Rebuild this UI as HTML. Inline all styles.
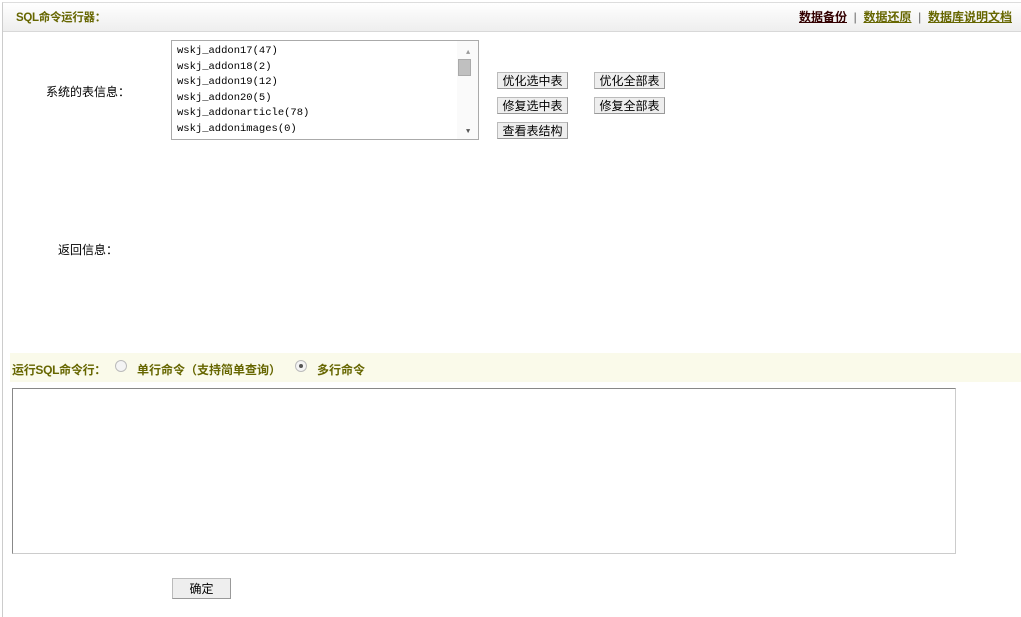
<!DOCTYPE html>
<html><head><meta charset="utf-8"><style>
body{margin:0;width:1021px;height:617px;background:#fff;font-family:"Liberation Sans","Noto Sans CJK SC",sans-serif;font-size:12px;position:relative;overflow:hidden}
.a{position:absolute}
.frame{left:2px;top:2px;width:1019px;height:615px;border-left:1px solid #ccc;border-top:1px solid #ddd;box-sizing:border-box}
.hdr{left:3px;top:3px;width:1018px;height:28px;background:linear-gradient(#fff,#eee);border-bottom:1px solid #d8d8d8}
.olive{color:#666600;font-weight:bold}
.btn{position:absolute;height:17px;line-height:17px;background:#eee;border:1px solid #bbb;border-right-color:#999;border-bottom-color:#999;font-size:12px;text-align:center;box-sizing:border-box}
.list{left:171px;top:40px;width:308px;height:100px;border:1px solid #aaa;box-sizing:border-box;overflow:hidden}
.list div{font-family:"Liberation Mono",monospace;font-size:10.5px;line-height:15.6px;padding-left:5px}
.sb{right:0;top:0;width:16px;height:98px;background:#fafafa}
</style></head><body>
<div class="a frame"></div>
<div class="a hdr"></div>
<div class="a olive" style="left:16px;top:9px;font-size:11.5px;letter-spacing:-0.3px">SQL命令运行器：</div>
<div class="a" style="right:9px;top:8px;font-size:12px;font-weight:bold">
<u style="color:#330000">数据备份</u> <span style="color:#666;font-weight:normal">&nbsp;|&nbsp;</span> <u class="olive">数据还原</u> <span style="color:#666;font-weight:normal">&nbsp;|&nbsp;</span> <u class="olive">数据库说明文档</u></div>
<div class="a" style="left:46px;top:83px">系统的表信息：</div>
<div class="a list"><div style="padding-top:3px">wskj_addon17(47)</div><div>wskj_addon18(2)</div><div>wskj_addon19(12)</div><div>wskj_addon20(5)</div><div>wskj_addonarticle(78)</div><div>wskj_addonimages(0)</div>
<div class="a sb"><div class="a" style="left:1px;top:18px;width:13px;height:17px;background:#c0c0c0;border:1px solid #aaa;box-sizing:border-box"></div><div class="a" style="left:4px;top:5px;font-size:7px;color:#999">▲</div><div class="a" style="left:4px;top:84px;font-size:7px;color:#555">▼</div></div></div>
<div class="btn" style="left:497px;top:72px;width:71px">优化选中表</div>
<div class="btn" style="left:594px;top:72px;width:71px">优化全部表</div>
<div class="btn" style="left:497px;top:97px;width:71px">修复选中表</div>
<div class="btn" style="left:594px;top:97px;width:71px">修复全部表</div>
<div class="btn" style="left:497px;top:122px;width:71px">查看表结构</div>
<div class="a" style="left:58px;top:241px">返回信息：</div>
<div class="a" style="left:10px;top:353px;width:1011px;height:29px;background:#fafaea"></div>
<div class="a olive" style="left:12px;top:361px;letter-spacing:-0.3px">运行SQL命令行：</div>
<div class="a" style="left:115px;top:360px;width:10px;height:10px;border:1px solid #bbb;border-radius:50%;background:#f4f4f4"></div>
<div class="a olive" style="left:137px;top:361px">单行命令（支持简单查询）</div>
<div class="a" style="left:295px;top:360px;width:10px;height:10px;border:1px solid #bbb;border-radius:50%;background:#f4f4f4"><div class="a" style="left:3px;top:3px;width:4px;height:4px;border-radius:50%;background:#555"></div></div>
<div class="a olive" style="left:317px;top:361px">多行命令</div>
<div class="a" style="left:12px;top:388px;width:944px;height:166px;border:1px solid #888;border-right-color:#ccc;border-bottom-color:#ccc;box-sizing:border-box"></div>
<div class="btn" style="left:172px;top:578px;width:59px;height:21px;line-height:20px">确定</div>
</body></html>
